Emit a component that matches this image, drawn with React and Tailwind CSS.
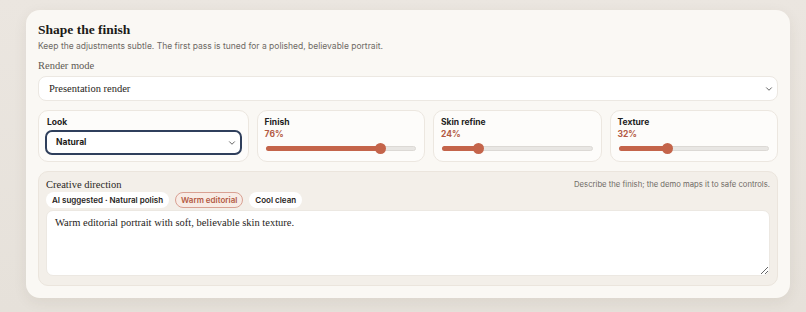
import React, { useState } from "react";

function Slider({ label, value }) {
  return (
    <div className="bg-[#fdfcfa] border border-[#ece7e0] rounded-[10px] px-[7px] pt-[5px] pb-[7px] font-['Inter','Liberation_Sans',sans-serif]">
      <div className="text-[8.5px] font-bold text-[#222] leading-[12px]">{label}</div>
      <div className="text-[8.5px] font-bold text-[#b35a43] leading-[12px]">{value}%</div>
      <div className="relative h-[12px] mt-[2px] mx-[1px]">
        <div className="absolute left-0 right-0 top-[4px] h-[5px] rounded-full bg-[#e8e6e3] border border-[#dcd9d5]" />
        <div className="absolute left-0 top-[4px] h-[5px] rounded-full bg-[#c4644a]" style={{ width: `${value}%` }} />
        <div className="absolute top-[1px] w-[11px] h-[11px] rounded-full bg-[#c4644a] -ml-[5px]" style={{ left: `${value}%` }} />
      </div>
    </div>
  );
}

function Chevron() {
  return (
    <svg width="10" height="10" viewBox="0 0 24 24" fill="none" stroke="#555" strokeWidth="2.2" strokeLinecap="round" strokeLinejoin="round">
      <path d="m6 9 6 6 6-6" />
    </svg>
  );
}

export default function App() {
  const [chip, setChip] = useState("Warm editorial");
  const chips = ["AI suggested · Natural polish", "Warm editorial", "Cool clean"];

  return (
    <div className="w-[806px] h-[312px] bg-gradient-to-b from-[#ebe6e0] to-[#e6e1da] pl-[26px] pr-[16px] pt-[10px] overflow-hidden">
      <div className="bg-[#faf8f4] rounded-[14px] shadow-[0_4px_14px_rgba(80,60,40,0.08)] px-[12px] pt-[11px] pb-[12px]">
        <h1 className="text-[13.5px] font-bold text-[#1c1a17] leading-[18px] font-['Liberation_Serif',Georgia,serif]">Shape the finish</h1>
        <p className="text-[8.5px] text-[#6e6a65] leading-[12px] mt-[1px] font-['Inter','Liberation_Sans',sans-serif]">
          Keep the adjustments subtle. The first pass is tuned for a polished, believable portrait.
        </p>

        <div className="text-[10.5px] text-[#5d5953] leading-[14px] mt-[7px] font-['Liberation_Serif',Georgia,serif]">Render mode</div>
        <div className="mt-[3px] h-[25px] bg-white border border-[#ece8e2] rounded-[8px] flex items-center justify-between pl-[10px] pr-[3px]">
          <span className="text-[10.5px] text-[#1f1d1a] font-['Liberation_Serif',Georgia,serif]">Presentation render</span>
          <Chevron />
        </div>

        <div className="grid grid-cols-[1.25fr_1fr_1fr_1fr] gap-[8px] mt-[9px]">
          <div className="bg-[#fdfcfa] border border-[#ece7e0] rounded-[10px] px-[6px] pt-[5px] pb-[6px] font-['Inter','Liberation_Sans',sans-serif]">
            <div className="text-[8.5px] font-bold text-[#222] leading-[12px] pl-[2px]">Look</div>
            <div className="mt-[2px] h-[25px] bg-white border-2 border-[#2f3f5c] rounded-[7px] flex items-center justify-between pl-[9px] pr-[3px]">
              <span className="text-[8.5px] font-bold text-[#1f1d1a]">Natural</span>
              <Chevron />
            </div>
          </div>
          <Slider label="Finish" value={76} />
          <Slider label="Skin refine" value={24} />
          <Slider label="Texture" value={32} />
        </div>

        <div className="mt-[9px] bg-[#f3efe9] border border-[#ebe5dd] rounded-[10px] px-[7px] pt-[6px] pb-[9px]">
          <div className="flex items-center justify-between">
            <span className="text-[10.5px] text-[#2a2724] leading-[14px] font-['Liberation_Serif',Georgia,serif]">Creative direction</span>
            <span className="text-[7.7px] text-[#6e6a65] font-['Inter','Liberation_Sans',sans-serif]">Describe the finish; the demo maps it to safe controls.</span>
          </div>
          <div className="flex gap-[6px]">
            {chips.map((c) => (
              <button
                key={c}
                onClick={() => setChip(c)}
                className={
                  c === chip
                    ? "h-[16px] px-[5px] rounded-full border border-[#d9a193] bg-[#f8ece6] text-[8px] font-semibold text-[#b35a43] font-['Inter','Liberation_Sans',sans-serif]"
                    : "h-[16px] px-[5px] rounded-full border border-transparent bg-white text-[8px] font-semibold text-[#1f1d1a] font-['Inter','Liberation_Sans',sans-serif]"
                }
              >
                {c}
              </button>
            ))}
          </div>
          <textarea
            className="mt-[2px] block w-full h-[66px] bg-white border border-[#ece8e2] rounded-[7px] px-[8px] py-[4px] text-[10.5px] text-[#1f1d1a] outline-none font-['Liberation_Serif',Georgia,serif]"
            defaultValue="Warm editorial portrait with soft, believable skin texture."
          />
        </div>
      </div>
    </div>
  );
}
